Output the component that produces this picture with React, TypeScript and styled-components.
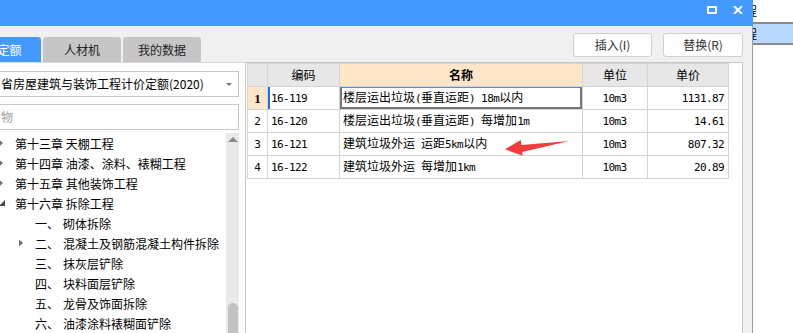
import React from 'react';
import styled, { createGlobalStyle } from 'styled-components';

const GlobalStyle = createGlobalStyle`
  html, body {
    margin: 0;
    padding: 0;
    background: #fff;
    overflow: hidden;
  }
  body {
    font-family: "Noto Sans CJK SC", "Liberation Sans", sans-serif;
    font-size: 12px;
    color: #000;
  }
`;

const Screen = styled.div`
  position: relative;
  display: flex;
  width: 793px;
  height: 333px;
  overflow: hidden;
`;

const Dialog = styled.div`
  width: 753px;
  flex: none;
  display: flex;
  flex-direction: column;
`;

const TitleBar = styled.div`
  height: 26px;
  flex: none;
  background: #4499ff;
  display: flex;
  justify-content: flex-end;
  align-items: flex-start;
  gap: 16px;
  padding: 6px 10px 0 0;
  box-sizing: border-box;
`;

const Body = styled.div`
  flex: 1;
  min-height: 0;
  display: flex;
  flex-direction: column;
  background: #f0f0f0;
  border-right: 1px solid #9c9c9c;
`;

const Toolbar = styled.div`
  height: 36px;
  flex: none;
  display: flex;
  align-items: flex-start;
  padding-right: 9px;
`;

const Tabs = styled.div`
  display: flex;
  gap: 2px;
  margin: 11px 0 0 -22px;
`;

const Tab = styled.div<{ $active?: boolean; $w: number }>`
  width: ${p => p.$w}px;
  height: 25px;
  line-height: 25px;
  text-align: center;
  border-radius: 3px 3px 0 0;
  background: ${p => (p.$active ? '#4499ff' : '#c6c6c6')};
  color: ${p => (p.$active ? '#fff' : '#222')};
`;

const Buttons = styled.div`
  display: flex;
  gap: 11px;
  margin: 7px 0 0 auto;
`;

const Button = styled.div<{ $w: number }>`
  width: ${p => p.$w}px;
  height: 24px;
  line-height: 22px;
  box-sizing: border-box;
  text-align: center;
  background: #fdfdfd;
  border: 1px solid #cfcfcf;
  border-radius: 3px;
  color: #333;
`;

const Main = styled.div`
  flex: 1;
  min-height: 0;
  display: flex;
  padding-right: 9px;
`;

const LeftPanel = styled.div`
  width: 245px;
  flex: none;
  box-sizing: border-box;
  background: #fff;
  border-top: 1px solid #d6d6d6;
  padding: 8px 6px 0 0;
  display: flex;
  flex-direction: column;
`;

const Field = styled.div<{ $muted?: boolean }>`
  position: relative;
  height: 26px;
  line-height: 24px;
  box-sizing: border-box;
  margin-left: -30px;
  padding-left: 30px;
  border: 1px solid #c8c8c8;
  color: ${p => (p.$muted ? '#a0a0a0' : '#000')};
  white-space: nowrap;
  overflow: hidden;
  & + & {
    margin-top: 7px;
  }
`;

const DropArrow = styled.span`
  position: absolute;
  right: 6px;
  top: 11px;
  width: 0;
  height: 0;
  border-left: 3px solid transparent;
  border-right: 3px solid transparent;
  border-top: 3px solid #777;
`;

const TreeArea = styled.div`
  flex: 1;
  min-height: 0;
  margin-top: 3px;
  display: flex;
`;

const TreeList = styled.div`
  flex: 1;
  margin-left: -6px;
  overflow: hidden;
`;

const TreeRow = styled.div<{ $level: number }>`
  height: 20px;
  display: flex;
  align-items: center;
  padding-left: ${p => p.$level * 20}px;
  white-space: nowrap;
`;

const ArrowBox = styled.span`
  width: 12px;
  height: 12px;
  flex: none;
  margin-right: 9px;
  display: flex;
`;

const Num = styled.span`
  width: 28px;
  flex: none;
`;

const Scrollbar = styled.div`
  width: 13px;
  flex: none;
  background: #e9e9e9;
  display: flex;
  flex-direction: column;
  align-items: center;
`;

const ScrollUp = styled.span`
  margin-top: 4px;
  width: 0;
  height: 0;
  border-left: 5px solid transparent;
  border-right: 5px solid transparent;
  border-bottom: 5px solid #8a8a8a;
`;

const Thumb = styled.span`
  margin-top: auto;
  width: 10px;
  height: 30px;
  background: #c2c2c2;
  border-radius: 5px 5px 0 0;
`;

const TablePanel = styled.div`
  flex: 1;
  background: #fff;
  border: 1px solid #c8c8c8;
  border-bottom: none;
  padding-left: 1px;
`;

const Grid = styled.table`
  border-collapse: collapse;
  table-layout: fixed;
`;

const Head = styled.th<{ $w: number; $hot?: boolean }>`
  width: ${p => p.$w}px;
  height: 23px;
  padding: 0;
  box-sizing: border-box;
  border: 1px solid #d4d4d4;
  background: ${p => (p.$hot ? '#ffe6c9' : '#e7e7e7')};
  font-weight: ${p => (p.$hot ? 700 : 400)};
  font-size: 12px;
  text-align: center;
  line-height: 20px;
`;

const Cell = styled.td<{ $align?: string; $hot?: boolean; $focus?: boolean; $mark?: boolean }>`
  height: 23px;
  box-sizing: border-box;
  padding: 0 4px 0 3px;
  border: 1px solid #d4d4d4;
  text-align: ${p => p.$align || 'left'};
  background: ${p => (p.$hot ? '#ffe6c9' : '#fff')};
  line-height: 20px;
  white-space: nowrap;
  overflow: hidden;
  box-shadow: ${p =>
    p.$focus
      ? 'inset 2px 0 #767676, inset -2px 0 #767676, inset 0 -2px #767676, inset 0 1px #3d8eff'
      : p.$mark
      ? 'inset 2px 0 #1f6fff'
      : 'none'};
`;

// SimSun-like half-width run: 6px per character
const Latin = styled.span`
  font-family: "DejaVu Sans Mono", "Liberation Mono", monospace;
  font-size: 11px;
  letter-spacing: -0.6px;
`;

const RowNo = styled.span<{ $bold?: boolean }>`
  font-family: ${p => (p.$bold ? '"Liberation Serif", serif' : '"DejaVu Sans Mono", monospace')};
  font-size: ${p => (p.$bold ? '13px' : '11px')};
  font-weight: ${p => (p.$bold ? 700 : 400)};
`;

const SideStrip = styled.div`
  flex: 1;
  display: flex;
  flex-direction: column;
  background: #fff;
`;

const SideRow = styled.div<{ $sel?: boolean }>`
  height: ${p => (p.$sel ? 19 : 22)}px;
  line-height: ${p => (p.$sel ? 19 : 22)}px;
  background: ${p => (p.$sel ? '#b9d8ff' : '#fff')};
  border-bottom: 2px solid #8a8a8a;
  overflow: hidden;
  white-space: nowrap;
  span {
    margin-left: -8px;
  }
`;

const Annotation = styled.svg`
  position: absolute;
  left: 503px;
  top: 137px;
`;

function mixed(text: string) {
  return text
    .split(/([\x00-\x7f]+)/)
    .filter(Boolean)
    .map((part, i) =>
      /^[\x00-\x7f]+$/.test(part) ? <Latin key={i}>{part}</Latin> : <span key={i}>{part}</span>
    );
}

type Node = { level: number; label: string; num?: string; arrow?: 'right' | 'down' };

const tree: Node[] = [
  { level: 0, label: '第十三章 天棚工程', arrow: 'right' },
  { level: 0, label: '第十四章 油漆、涂料、裱糊工程', arrow: 'right' },
  { level: 0, label: '第十五章 其他装饰工程', arrow: 'right' },
  { level: 0, label: '第十六章 拆除工程', arrow: 'down' },
  { level: 1, num: '一、', label: '砌体拆除' },
  { level: 1, num: '二、', label: '混凝土及钢筋混凝土构件拆除', arrow: 'right' },
  { level: 1, num: '三、', label: '抹灰层铲除' },
  { level: 1, num: '四、', label: '块料面层铲除' },
  { level: 1, num: '五、', label: '龙骨及饰面拆除' },
  { level: 1, num: '六、', label: '油漆涂料裱糊面铲除' },
];

const rows = [
  { code: '16-119', name: '楼层运出垃圾(垂直运距) 18m以内', unit: '10m3', price: '1131.87' },
  { code: '16-120', name: '楼层运出垃圾(垂直运距) 每增加1m', unit: '10m3', price: '14.61' },
  { code: '16-121', name: '建筑垃圾外运 运距5km以内', unit: '10m3', price: '807.32' },
  { code: '16-122', name: '建筑垃圾外运 每增加1km', unit: '10m3', price: '20.89' },
];

function Arrow({ kind }: { kind?: 'right' | 'down' }) {
  return (
    <ArrowBox>
      {kind && (
        <svg width="12" height="12" viewBox="0 0 12 12">
          {kind === 'right' ? (
            <polygon points="5,2.5 9,6 5,9.5" fill="#6e6e6e" />
          ) : (
            <polygon points="11,3 11,9 5,9" fill="#4a4a4a" />
          )}
        </svg>
      )}
    </ArrowBox>
  );
}

export default function App() {
  return (
    <Screen>
      <GlobalStyle />
      <Dialog>
        <TitleBar>
          <svg width="10" height="8" viewBox="0 0 10 8">
            <rect x="1" y="1" width="8" height="6" fill="none" stroke="#fff" strokeWidth="2" />
          </svg>
          <svg width="10" height="8" viewBox="0 0 10 8">
            <path d="M1 0 L9 8 M9 0 L1 8" stroke="#fff" strokeWidth="2" />
          </svg>
        </TitleBar>
        <Body>
          <Toolbar>
            <Tabs>
              <Tab $active $w={63}>定额</Tab>
              <Tab $w={78}>人材机</Tab>
              <Tab $w={78}>我的数据</Tab>
            </Tabs>
            <Buttons>
              <Button $w={79}>插入(I)</Button>
              <Button $w={80}>替换(R)</Button>
            </Buttons>
          </Toolbar>
          <Main>
            <LeftPanel>
              <Field>
                省房屋建筑与装饰工程计价定额(2020)
                <DropArrow />
              </Field>
              <Field $muted>物</Field>
              <TreeArea>
                <TreeList>
                  {tree.map((n, i) => (
                    <TreeRow key={i} $level={n.level}>
                      <Arrow kind={n.arrow} />
                      {n.num && <Num>{n.num}</Num>}
                      <span>{n.label}</span>
                    </TreeRow>
                  ))}
                </TreeList>
                <Scrollbar>
                  <ScrollUp />
                  <Thumb />
                </Scrollbar>
              </TreeArea>
            </LeftPanel>
            <TablePanel>
              <Grid>
                <thead>
                  <tr>
                    <Head $w={20} />
                    <Head $w={72}>编码</Head>
                    <Head $w={243} $hot>名称</Head>
                    <Head $w={65}>单位</Head>
                    <Head $w={81}>单价</Head>
                  </tr>
                </thead>
                <tbody>
                  {rows.map((r, i) => (
                    <tr key={r.code}>
                      <Cell $align="center" $hot={i === 0} style={{ padding: 0 }}>
                        <RowNo $bold={i === 0}>{i + 1}</RowNo>
                      </Cell>
                      <Cell $mark={i === 0}>{mixed(r.code)}</Cell>
                      <Cell $focus={i === 0}>{mixed(r.name)}</Cell>
                      <Cell $align="center">{mixed(r.unit)}</Cell>
                      <Cell $align="right">{mixed(r.price)}</Cell>
                    </tr>
                  ))}
                </tbody>
              </Grid>
            </TablePanel>
          </Main>
        </Body>
      </Dialog>
      <SideStrip>
        <SideRow><span>程</span></SideRow>
        <SideRow $sel><span>程</span></SideRow>
      </SideStrip>
      <Annotation width="70" height="22" viewBox="0 0 70 22">
        <polygon points="2,12.3 17.7,3 18.5,8 66.3,4 19,15 19.7,18.7" fill="#f23c3c" />
      </Annotation>
    </Screen>
  );
}
